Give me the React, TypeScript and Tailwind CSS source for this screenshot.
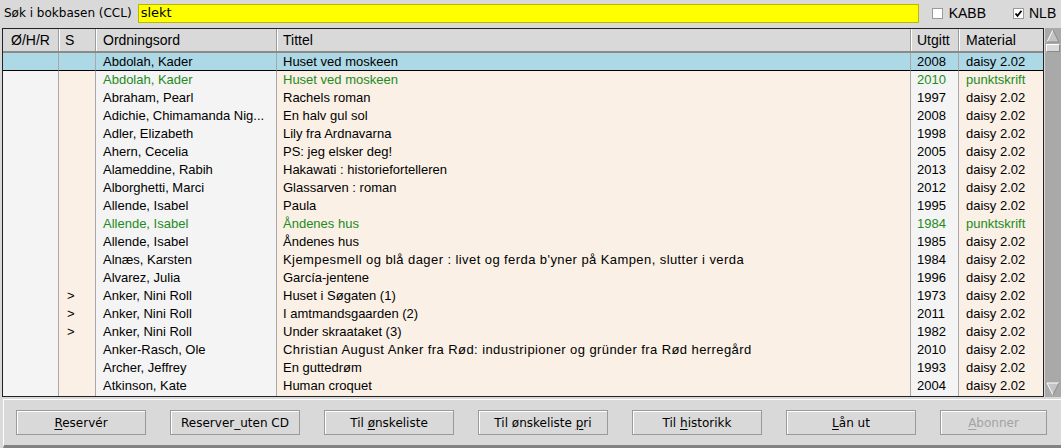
import React from "react";

type Row = {
  s?: string;
  author: string;
  title: string;
  year: string;
  mat: string;
  green?: boolean;
  selected?: boolean;
  wide?: boolean;
};

const rows: Row[] = [
  { author: "Abdolah, Kader", title: "Huset ved moskeen", year: "2008", mat: "daisy 2.02", selected: true },
  { author: "Abdolah, Kader", title: "Huset ved moskeen", year: "2010", mat: "punktskrift", green: true },
  { author: "Abraham, Pearl", title: "Rachels roman", year: "1997", mat: "daisy 2.02" },
  { author: "Adichie, Chimamanda Nig...", title: "En halv gul sol", year: "2008", mat: "daisy 2.02" },
  { author: "Adler, Elizabeth", title: "Lily fra Ardnavarna", year: "1998", mat: "daisy 2.02" },
  { author: "Ahern, Cecelia", title: "PS: jeg elsker deg!", year: "2005", mat: "daisy 2.02" },
  { author: "Alameddine, Rabih", title: "Hakawati : historiefortelleren", year: "2013", mat: "daisy 2.02" },
  { author: "Alborghetti, Marci", title: "Glassarven : roman", year: "2012", mat: "daisy 2.02" },
  { author: "Allende, Isabel", title: "Paula", year: "1995", mat: "daisy 2.02" },
  { author: "Allende, Isabel", title: "Åndenes hus", year: "1984", mat: "punktskrift", green: true },
  { author: "Allende, Isabel", title: "Åndenes hus", year: "1985", mat: "daisy 2.02" },
  { author: "Alnæs, Karsten", title: "Kjempesmell og blå dager : livet og ferda b'yner på Kampen, slutter i verda", year: "1984", mat: "daisy 2.02", wide: true },
  { author: "Alvarez, Julia", title: "García-jentene", year: "1996", mat: "daisy 2.02" },
  { s: ">", author: "Anker, Nini Roll", title: "Huset i Søgaten (1)", year: "1973", mat: "daisy 2.02" },
  { s: ">", author: "Anker, Nini Roll", title: "I amtmandsgaarden (2)", year: "2011", mat: "daisy 2.02" },
  { s: ">", author: "Anker, Nini Roll", title: "Under skraataket (3)", year: "1982", mat: "daisy 2.02" },
  { author: "Anker-Rasch, Ole", title: "Christian August Anker fra Rød: industripioner og gründer fra Rød herregård", year: "2010", mat: "daisy 2.02", wide: true },
  { author: "Archer, Jeffrey", title: "En guttedrøm", year: "1993", mat: "daisy 2.02" },
  { author: "Atkinson, Kate", title: "Human croquet", year: "2004", mat: "daisy 2.02" },
];

const cols = "grid grid-cols-[55px_37px_181px_634px_48px_85px]";
const gray = "bg-[#f4f4f4]";
const peach = "bg-[#faf0e6]";

const Btn = ({ pre = "", u = "", post = "", w = "w-[130px]", disabled = false }) => (
  <div
    className={`${w} h-[25px] flex items-center justify-center border border-[#9a9a9a] bg-[#d9d9d9] shadow-[inset_1px_1px_0_#ffffff] text-[12px] font-['DejaVu_Sans',sans-serif] ${
      disabled ? "text-[#a3a3a3]" : "text-black"
    }`}
  >
    <span className="whitespace-pre">
      {pre}
      <span className="underline underline-offset-2">{u}</span>
      {post}
    </span>
  </div>
);

const Check = ({ checked }: { checked: boolean }) => (
  <div className="w-[11px] h-[11px] bg-white border border-[#9a9a9a] flex items-center justify-center">
    {checked && (
      <svg width="9" height="9" viewBox="0 0 9 9">
        <path d="M1.5 4.5 L3.5 6.8 L7.5 1.8" stroke="black" strokeWidth="1.8" fill="none" />
      </svg>
    )}
  </div>
);

export default function App() {
  return (
    <div className="w-[1061px] h-[448px] bg-[#d9d9d9] overflow-hidden flex flex-col font-['Liberation_Sans',Arial,sans-serif] text-black">
      {/* search bar */}
      <div className="h-[28px] flex items-center pb-[2px]">
        <span className="ml-[4px] text-[12px] font-['DejaVu_Sans',sans-serif]">Søk i bokbasen (CCL)</span>
        <div className="ml-[6px] w-[781px] h-[19px] bg-[#ffff00] border border-[#b8b800] flex items-center pl-[2px] text-[13px] font-['DejaVu_Sans',sans-serif]">
          slekt
        </div>
        <div className="ml-[13px]">
          <Check checked={false} />
        </div>
        <span className="ml-[6px] text-[14px]">KABB</span>
        <div className="ml-[27px]">
          <Check checked={true} />
        </div>
        <span className="ml-[5px] text-[14px]">NLB</span>
      </div>

      {/* table + scrollbar */}
      <div className="flex h-[369px]">
        <div className="ml-[2px] w-[1042px] border border-[#222] flex flex-col">
          <div className={`${cols} h-[24px] border-b-2 border-[#8a8a8a] text-[14px]`}>
            <div className="pl-[8px] flex items-center">Ø/H/R</div>
            <div className="pl-[6px] flex items-center border-l border-[#9c9c9c] shadow-[inset_1px_0_0_#ffffff]">S</div>
            <div className="pl-[7px] flex items-center border-l border-[#9c9c9c] shadow-[inset_1px_0_0_#ffffff]">Ordningsord</div>
            <div className="pl-[6px] flex items-center border-l border-[#9c9c9c] shadow-[inset_1px_0_0_#ffffff]">Tittel</div>
            <div className="pl-[6px] flex items-center border-l border-[#9c9c9c] shadow-[inset_1px_0_0_#ffffff]">Utgitt</div>
            <div className="pl-[7px] flex items-center border-l border-[#9c9c9c] shadow-[inset_1px_0_0_#ffffff]">Material</div>
          </div>
          {rows.map((r, i) => {
            const c = r.green ? "text-[#228b22]" : "text-black";
            const sel = r.selected;
            const bgG = sel ? "bg-[#add8e6]" : gray;
            const bgP = sel ? "bg-[#add8e6]" : peach;
            const cell = `h-[18px] leading-[18px] text-[13px] whitespace-nowrap overflow-hidden ${c} ${
              sel ? "border-b border-b-black leading-[17px]" : ""
            }`;
            return (
              <div key={i} className={cols}>
                <div className={`${cell} ${bgG}`}></div>
                <div className={`${cell} ${bgP} border-l border-l-[#a8a8a8] pl-[8px]`}>{r.s}</div>
                <div className={`${cell} ${bgG} border-l border-l-[#a8a8a8] pl-[7px]`}>{r.author}</div>
                <div className={`${cell} ${bgP} border-l border-l-[#a8a8a8] pl-[6px] ${r.wide ? "tracking-[0.42px]" : ""}`}>
                  {r.title}
                </div>
                <div className={`${cell} ${bgG} border-l border-l-[#a8a8a8] pl-[6px]`}>{r.year}</div>
                <div className={`${cell} ${bgP} border-l border-l-[#a8a8a8] pl-[7px]`}>{r.mat}</div>
              </div>
            );
          })}
          <div className={`${cols} flex-1`}>
            <div className={gray}></div>
            <div className={`${peach} border-l border-l-[#a8a8a8]`}></div>
            <div className={`${gray} border-l border-l-[#a8a8a8]`}></div>
            <div className={`${peach} border-l border-l-[#a8a8a8]`}></div>
            <div className={`${gray} border-l border-l-[#a8a8a8]`}></div>
            <div className={`${peach} border-l border-l-[#a8a8a8]`}></div>
          </div>
        </div>

        {/* scrollbar */}
        <div className="ml-[1px] w-[16px] bg-[#a9a9a9] flex flex-col items-center py-[1px]">
          <svg width="14" height="14" viewBox="0 0 14 14">
            <polygon points="7,1 13,13 1,13" fill="#c4c4c4" />
            <path d="M1 13 L7 1" stroke="#ffffff" strokeWidth="1" />
            <path d="M7 1 L13 13 L1 13" stroke="#8a8a8a" strokeWidth="1" fill="none" />
          </svg>
          <div className="mt-[1px] w-[14px] h-[8px] bg-[#d9d9d9] border border-[#ffffff] border-r-[#8a8a8a] border-b-[#8a8a8a]"></div>
          <div className="flex-1"></div>
          <svg width="14" height="14" viewBox="0 0 14 14">
            <polygon points="1,1 13,1 7,13" fill="#c4c4c4" />
            <path d="M7 13 L1 1 L13 1" stroke="#ffffff" strokeWidth="1" fill="none" />
            <path d="M13 1 L7 13" stroke="#8a8a8a" strokeWidth="1" />
          </svg>
        </div>
      </div>

      {/* buttons */}
      <div className="mt-[2px] ml-[3px] flex-1 border-t border-l border-white border-b-[3px] border-b-[#828282] pl-[12px] pt-[10px] flex gap-[24px]">
        <Btn u="R" post="eservér" />
        <Btn pre="Reserver_uten CD" />
        <Btn pre="Til " u="ø" post="nskeliste" />
        <Btn pre="Til ønskeliste " u="p" post="ri" />
        <Btn pre="Til " u="h" post="istorikk" />
        <Btn u="L" post="ån ut" />
        <Btn u="A" post="bonner" w="w-[107px]" disabled />
      </div>
    </div>
  );
}
